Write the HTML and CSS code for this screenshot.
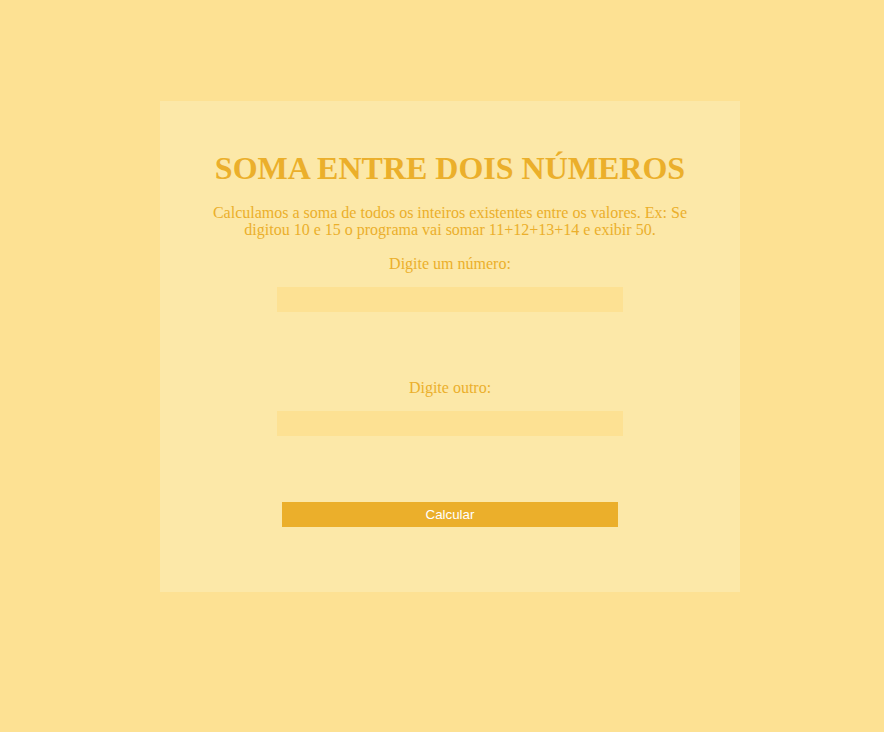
FILE: index.html
```html
<!DOCTYPE html>
<html lang="pt-BR">
<head>
<meta charset="utf-8">
<title>Soma entre dois números</title>
<link rel="stylesheet" href="styles.css">
</head>
<body>
<div class="page">
  <main class="card">
    <h1 class="title">SOMA ENTRE DOIS NÚMEROS</h1>
    <p class="desc">Calculamos a soma de todos os inteiros existentes entre os valores. Ex: Se digitou 10 e 15 o programa vai somar 11+12+13+14 e exibir 50.</p>
    <label class="label label-first" for="n1">Digite um número:</label>
    <input class="field" id="n1" type="number">
    <label class="label label-second" for="n2">Digite outro:</label>
    <input class="field" id="n2" type="number">
    <button class="btn" type="button">Calcular</button>
  </main>
</div>
</body>
</html>
```

FILE: styles.css
```css
html, body {
  margin: 0;
  padding: 0;
  background: #fde193;
}

.page {
  padding: 101px 0 0 160px;
  min-height: 732px;
  box-sizing: border-box;
}

.card {
  width: 580px;
  box-sizing: border-box;
  background: #fce8a8;
  padding: 49px 0 65px;
  display: flex;
  flex-direction: column;
  align-items: center;
  font-family: "Liberation Serif", "Times New Roman", serif;
  color: #ebaf2b;
  text-align: center;
}

.title {
  margin: 0;
  font-size: 32px;
  line-height: 36px;
  font-weight: bold;
}

.desc {
  margin: 18px 0 0;
  width: 490px;
  font-size: 16px;
  line-height: 17px;
}

.label {
  display: block;
  font-size: 16px;
  line-height: 18px;
}

.label-first {
  margin-top: 17px;
}

.label-second {
  margin-top: 67px;
}

.field {
  margin: 14px 0 0;
  width: 346px;
  height: 25px;
  box-sizing: border-box;
  border: none;
  outline: none;
  background: #fde193;
  padding: 0 6px;
  color: #ebaf2b;
  font-family: "Liberation Sans", Arial, sans-serif;
  -moz-appearance: textfield;
}

.field::-webkit-outer-spin-button,
.field::-webkit-inner-spin-button {
  -webkit-appearance: none;
  margin: 0;
}

.btn {
  margin-top: 66px;
  width: 336px;
  height: 25px;
  border: none;
  padding: 0;
  background: #ebaf2b;
  color: #ffffff;
  font-family: "Liberation Sans", Arial, sans-serif;
  font-size: 13.333px;
  cursor: pointer;
}
```
